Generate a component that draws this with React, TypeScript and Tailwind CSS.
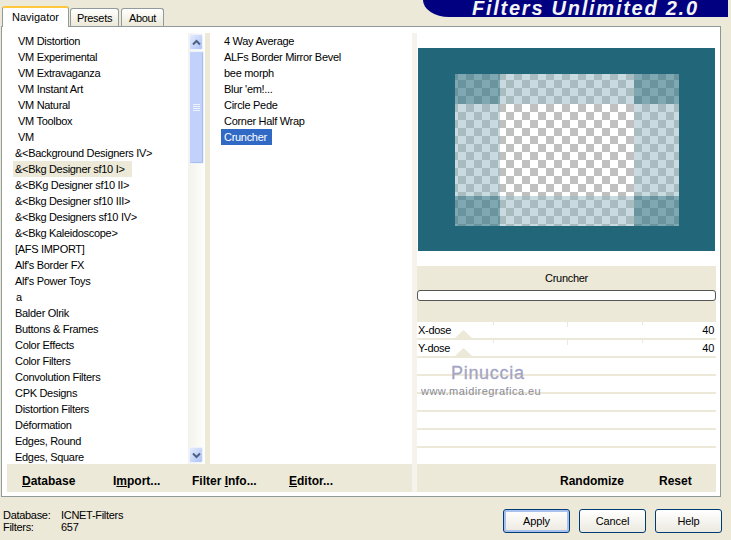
const F = "[font-family:'Liberation_Sans',Arial,sans-serif]";
const items: [string, number][] = [
  ["VM Distortion", 11], ["VM Experimental", 11], ["VM Extravaganza", 11], ["VM Instant Art", 11], ["VM Natural", 11], ["VM Toolbox", 11], ["VM", 11],
  ["&<Background Designers IV>", 8], ["&<Bkg Designer sf10 I>", 8], ["&<BKg Designer sf10 II>", 8], ["&<Bkg Designer sf10 III>", 8], ["&<Bkg Designers sf10 IV>", 8], ["&<Bkg Kaleidoscope>", 8],
  ["[AFS IMPORT]", 8], ["Alf's Border FX", 8], ["Alf's Power Toys", 8], ["a", 9], ["Balder Olrik", 8], ["Buttons & Frames", 8], ["Color Effects", 8], ["Color Filters", 8], ["Convolution Filters", 8], ["CPK Designs", 8], ["Distortion Filters", 8], ["Déformation", 8], ["Edges, Round", 8], ["Edges, Square", 8],
];
const filters = ["4 Way Average", "ALFs Border Mirror Bevel", "bee morph", "Blur 'em!...", "Circle Pede", "Corner Half Wrap", "Cruncher"];

function Checks({ id, a, b }: { id: string; a: string; b: string }) {
  return (
    <pattern id={id} x="498" y="104" width="16" height="16" patternUnits="userSpaceOnUse">
      <rect width="16" height="16" fill={a} />
      <rect width="8" height="8" fill={b} />
      <rect x="8" y="8" width="8" height="8" fill={b} />
    </pattern>
  );
}

function Preview() {
  return (
    <svg width="297" height="203" viewBox="418 48 297 203" className="block">
      <defs>
        <Checks id="w" a="#ffffff" b="#c0c0c0" />
        <Checks id="l" a="#c9dbe0" b="#a9bcc0" />
        <Checks id="d" a="#7fa8b2" b="#6a959f" />
      </defs>
      <rect x="418" y="48" width="297" height="203" fill="#22667a" />
      <rect x="455" y="74" width="224" height="152" fill="url(#l)" />
      <rect x="500" y="104" width="134" height="92" fill="url(#w)" />
      <rect x="455" y="74" width="45" height="30" fill="url(#d)" />
      <rect x="634" y="74" width="45" height="30" fill="url(#d)" />
      <rect x="455" y="196" width="45" height="30" fill="url(#d)" />
      <rect x="634" y="196" width="45" height="30" fill="url(#d)" />
    </svg>
  );
}

function Chevron({ up }: { up?: boolean }) {
  return (
    <svg width="9" height="7" viewBox="0 0 9 7">
      <path d={up ? "M1 5.5L4.5 2L8 5.5" : "M1 1.5L4.5 5L8 1.5"} fill="none" stroke="#4d6185" strokeWidth="2" />
    </svg>
  );
}

function ScrollBtn({ up }: { up?: boolean }) {
  return (
    <div className="mx-[1px] h-[16px] w-[14px] shrink-0 flex items-center justify-center rounded-[2px] border border-[#eef2fd] bg-gradient-to-br from-[#e4ebfd] to-[#aec3f5]">
      <Chevron up={up} />
    </div>
  );
}

function Scrollbar() {
  return (
    <div className="w-[17px] shrink-0 flex flex-col py-[1px] bg-gradient-to-r from-[#f3f2ec] to-[#fefefb]">
      <ScrollBtn up />
      <div className="ml-[1px] mt-[1px] h-[113px] w-[15px] flex flex-col items-center justify-center gap-[1px] rounded-[2px] border border-[#eef2fd] bg-[#c1d1fa] shadow-[inset_-1px_-1px_0_#a8bdf0]">
        {[0, 1, 2, 3].map((i) => <div key={i} className="h-[1px] w-[7px] bg-[#eef2fd]" />)}
      </div>
      <div className="flex-1" />
      <ScrollBtn />
    </div>
  );
}

function Row({ children }: { children?: React.ReactNode }) {
  return (
    <div className="relative flex h-[18px] shrink-0 justify-between border-b-2 border-[#ece9d8] bg-white pl-[1px] pr-[2px] leading-[16px] last:h-[16px] last:border-b-0">
      {children}
    </div>
  );
}

function Slider({ label, value }: { label: string; value: number }) {
  return (
    <Row>
      <span className="relative z-10">{label}</span>
      <span className="relative z-10">{value}</span>
      <div className="absolute left-[38px] top-[8px] h-[8px] w-[17px] bg-[#ece9d8] [clip-path:polygon(50%_0,100%_100%,0_100%)]" />
      <div className="absolute left-[76px] top-0 h-[3px] w-[1px] bg-[#ece9d8]" />
      <div className="absolute left-[150px] top-0 h-[5px] w-[1px] bg-[#ece9d8]" />
      <div className="absolute left-[225px] top-0 h-[3px] w-[1px] bg-[#ece9d8]" />
    </Row>
  );
}

function Btn({ label, active }: { label: string; active?: boolean }) {
  return (
    <div className={`flex h-[24px] w-[67px] items-center justify-center rounded-[3px] border border-[#003c74] bg-gradient-to-b from-white to-[#ece9e0] tracking-[-0.1px] text-black ${active ? "shadow-[inset_0_0_0_2px_#a9c1ee]" : ""}`}>
      {label}
    </div>
  );
}

export default function App() {
  return (
    <div className={`${F} relative flex h-[540px] w-[731px] flex-col overflow-hidden bg-[#ece9d8] text-[11px] leading-[16px] tracking-[-0.3px] text-black`}>
      <div className="flex h-[26px] shrink-0 items-start justify-between pl-[2px] pr-[3px]">
        <div className="flex h-full items-end">
          <div className="relative z-10 mb-[-1px] flex h-[21px] w-[67px] items-center justify-center rounded-t-[3px] border-x border-[#919b9c] border-t-2 border-t-[#ffc73c] bg-white pb-[2px] tracking-normal">Navigator</div>
          <div className="ml-[1px] flex h-[18px] w-[49px] items-center justify-center rounded-t-[3px] border-x border-t border-[#919b9c] bg-gradient-to-b from-white to-[#ece9d8]">Presets</div>
          <div className="ml-[2px] flex h-[18px] w-[43px] items-center justify-center rounded-t-[3px] border-x border-t border-[#919b9c] bg-gradient-to-b from-white to-[#ece9d8]">About</div>
        </div>
        <div className="flex h-[17px] w-[305px] items-center justify-start rounded-bl-[26px_17px] bg-[#000080] pl-[49px]">
          <span className="text-[20px] font-bold italic leading-[17px] tracking-[1.75px] text-[#f4f4f4] whitespace-nowrap">Filters Unlimited 2.0</span>
        </div>
      </div>

      <div className="ml-[1px] flex h-[471px] w-[720px] shrink-0 border border-[#919b9c] border-r-[#8d9597] bg-white pb-[4px] pl-[5px] pr-[4px] pt-[6px]">
        <div className="flex w-[405px] shrink-0 flex-col">
          <div className="flex h-[431px] overflow-hidden">
            <div className="w-[181px] shrink-0 overflow-hidden">
              {items.map(([t, p]) => (
                t === "&<Bkg Designer sf10 I>" ? (
                  <div key={t} className="h-[16px] pl-[6px] whitespace-nowrap">
                    <span className="block h-[16px] w-[119px] bg-[#ece9d8] pl-[2px]">{t}</span>
                  </div>
                ) : (
                  <div key={t} className="h-[16px] whitespace-nowrap" style={{ paddingLeft: p }}>{t}</div>
                )
              ))}
            </div>
            <Scrollbar />
            <div className="w-[5px] shrink-0 bg-[#ece9d8]" />
            <div className="flex-1 pl-[14px]">
              {filters.map((t) => (
                <div key={t} className="h-[16px] whitespace-nowrap">
                  {t === "Cruncher" ? (
                    <span className="ml-[-3px] block h-[16px] w-[51px] bg-[#316ac5] pl-[3px] text-white">{t}</span>
                  ) : t}
                </div>
              ))}
            </div>
          </div>
          <div className="flex h-[28px] items-center bg-[#ece9d8] pl-[15px] pt-[5px] text-[12px] font-bold tracking-normal">
            <span className="w-[91px]"><u>D</u>atabase</span>
            <span className="w-[79px]">I<u>m</u>port...</span>
            <span className="w-[97px]">Filter <u>I</u>nfo...</span>
            <span><u>E</u>ditor...</span>
          </div>
        </div>

        <div className="w-[5px] shrink-0 bg-[#f5f3ec]" />

        <div className="relative flex w-[299px] shrink-0 flex-col">
          <div className="h-[233px] pl-[1px] pt-[15px]"><Preview /></div>
          <div className="flex h-[56px] flex-col bg-[#ece9d8]">
            <div className="flex h-[24px] items-center justify-center">Cruncher</div>
            <div className="h-[11px] rounded-[3px] border border-[#555] bg-white" />
          </div>
          <div className="flex flex-col">
            <Slider label="X-dose" value={40} />
            <Slider label="Y-dose" value={40} />
            <Row /><Row /><Row /><Row /><Row /><Row />
          </div>
          <div className="flex h-[28px] items-center bg-[#ece9d8] pl-[143px] pt-[5px] text-[12px] font-bold tracking-normal">
            <span className="w-[99px]">Randomize</span>
            <span>Reset</span>
          </div>
          <div className="absolute left-[34px] top-[330px] text-[18px] leading-[20px] tracking-[0.7px] text-[#a4a4c4] [-webkit-text-stroke:0.3px_#a4a4c4]">Pinuccia</div>
          <div className="absolute left-[4px] top-[351px] text-[11px] leading-[14px] tracking-[0.45px] text-[#8a8a98]">www.maidiregrafica.eu</div>
        </div>
      </div>

      <div className="flex flex-1 items-start justify-between pr-[9px]">
        <div className="grid grid-cols-[58px_auto] pl-[3px] pt-[12px] leading-[12px]">
          <span>Database:</span><span>ICNET-Filters</span>
          <span>Filters:</span><span>657</span>
        </div>
        <div className="flex gap-[9px] pt-[12px]">
          <Btn label="Apply" active />
          <Btn label="Cancel" />
          <Btn label="Help" />
        </div>
      </div>
    </div>
  );
}
